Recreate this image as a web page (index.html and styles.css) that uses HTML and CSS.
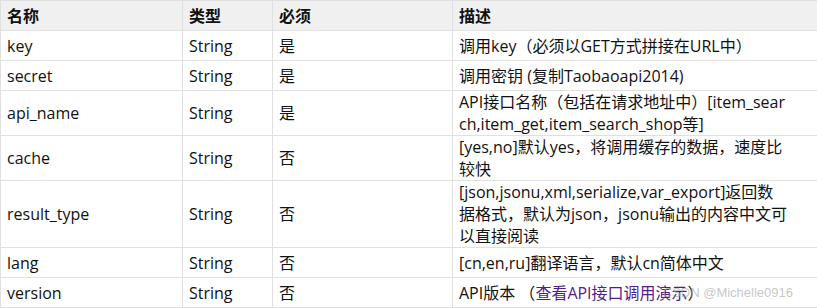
FILE: index.html
```html
<!DOCTYPE html>
<html lang="zh-CN">
<head>
<meta charset="utf-8">
<title>API参数</title>
<link rel="stylesheet" href="styles.css">
</head>
<body>
<div class="wrap">
<table class="params">
  <colgroup>
    <col class="c-name"><col class="c-type"><col class="c-req"><col class="c-desc">
  </colgroup>
  <thead>
    <tr><th>名称</th><th>类型</th><th>必须</th><th>描述</th></tr>
  </thead>
  <tbody>
    <tr><td>key</td><td>String</td><td>是</td><td>调用key（必须以GET方式拼接在URL中）</td></tr>
    <tr><td>secret</td><td>String</td><td>是</td><td>调用密钥 (复制Taobaoapi2014)</td></tr>
    <tr><td>api_name</td><td>String</td><td>是</td><td class="multi">API接口名称（包括在请求地址中）[item_sear<br>ch,item_get,item_search_shop等]</td></tr>
    <tr><td>cache</td><td>String</td><td>否</td><td class="multi">[yes,no]默认yes，将调用缓存的数据，速度比<br>较快</td></tr>
    <tr><td>result_type</td><td>String</td><td>否</td><td class="multi">[json,jsonu,xml,serialize,var_export]返回数<br>据格式，默认为json，jsonu输出的内容中文可<br>以直接阅读</td></tr>
    <tr><td>lang</td><td>String</td><td>否</td><td>[cn,en,ru]翻译语言，默认cn简体中文</td></tr>
    <tr><td>version</td><td>String</td><td>否</td><td>API版本 （<a class="demo" href="#">查看API接口调用演示</a>）</td></tr>
  </tbody>
</table>
<span class="watermark">CSDN @Michelle0916</span>
</div>
</body>
</html>
```
FILE: styles.css
```css
html, body {
  margin: 0;
  padding: 0;
  background: #ffffff;
}
.wrap {
  position: relative;
  width: 817px;
}
.params {
  border-collapse: collapse;
  table-layout: fixed;
  width: 817px;
  font-family: "Open Sans", "Noto Sans CJK SC", sans-serif;
  font-size: 16px;
  color: #111;
}
.c-name { width: 182px; }
.c-type { width: 90px; }
.c-req { width: 180px; }
.c-desc { width: 365px; }
.params th,
.params td {
  border: 1px solid #e0e0e0;
  padding: 0 6px;
  height: 29px;
  line-height: 22px;
  text-align: left;
  vertical-align: middle;
  white-space: nowrap;
  overflow: hidden;
}
.params th {
  background: #f0f0f0;
  font-weight: bold;
}
.params td.multi {
  vertical-align: top;
  line-height: 22px;
}
.demo {
  color: #551a8b;
  text-decoration: none;
}
.watermark {
  position: absolute;
  right: 24px;
  bottom: 8px;
  font-family: "Liberation Sans", Arial, sans-serif;
  font-size: 13px;
  color: rgba(160, 160, 160, 0.6);
  pointer-events: none;
}
```
